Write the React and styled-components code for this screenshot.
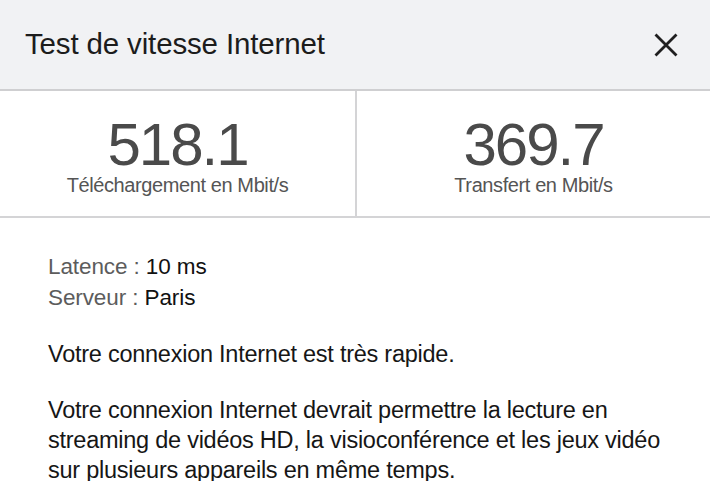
import React from "react";
import styled, { createGlobalStyle } from "styled-components";

const GlobalStyle = createGlobalStyle`
  html, body {
    margin: 0;
    padding: 0;
    background: #ffffff;
    font-family: "Liberation Sans", Arial, sans-serif;
    overflow: hidden;
  }
`;

const Page = styled.div`
  width: 710px;
  height: 481px;
  background: #ffffff;
  overflow: hidden;
`;

const Header = styled.div`
  height: 91px;
  background: #f1f2f4;
  border-bottom: 2px solid #cfcfd1;
  display: flex;
  align-items: center;
  justify-content: space-between;
  padding: 0 32px 0 25px;
  box-sizing: border-box;
`;

const Title = styled.h1`
  margin: 0 0 2px;
  font-size: 29.5px;
  font-weight: 400;
  color: #1c1c1c;
  letter-spacing: -0.15px;
`;

const CloseButton = styled.button`
  border: none;
  background: transparent;
  padding: 0;
  width: 24px;
  height: 24px;
  display: flex;
  align-items: center;
  justify-content: center;
  cursor: pointer;
`;

const Stats = styled.div`
  display: grid;
  grid-template-columns: 355px 1fr;
  height: 127px;
  border-bottom: 2px solid #d4d4d6;
  box-sizing: border-box;
`;

const Stat = styled.div`
  display: flex;
  flex-direction: column;
  align-items: center;
  justify-content: center;
  padding-top: 6px;
  border-left: ${(p) => (p.divided ? "2px solid #d4d4d6" : "none")};
`;

const Value = styled.div`
  font-size: 60px;
  line-height: 56px;
  color: #4a4a4a;
  letter-spacing: -2px;
`;

const Unit = styled.div`
  font-size: 20px;
  line-height: 24px;
  color: #555555;
  letter-spacing: -0.4px;
`;

const Body = styled.div`
  padding: 33px 44px 0 48px;
`;

const InfoLine = styled.div`
  font-size: 22.5px;
  line-height: 31px;
  color: #111111;
  letter-spacing: -0.1px;
`;

const InfoLabel = styled.span`
  color: #5c5c5c;
`;

const Paragraph = styled.p`
  margin: ${(p) => (p.first ? "26px 0 0" : "26px 0 0")};
  font-size: 23.5px;
  line-height: 30px;
  color: #161616;
  letter-spacing: -0.25px;
`;

const CloseIcon = () => (
  <svg width="24" height="24" viewBox="0 0 24 24">
    <path
      d="M1.5 1.5 L22.5 22.5 M22.5 1.5 L1.5 22.5"
      stroke="#1f1f1f"
      strokeWidth="2.8"
      fill="none"
    />
  </svg>
);

const App = () => {
  return (
    <Page>
      <GlobalStyle />
      <Header>
        <Title>Test de vitesse Internet</Title>
        <CloseButton aria-label="Fermer">
          <CloseIcon />
        </CloseButton>
      </Header>
      <Stats>
        <Stat>
          <Value>518.1</Value>
          <Unit>Téléchargement en Mbit/s</Unit>
        </Stat>
        <Stat divided>
          <Value>369.7</Value>
          <Unit>Transfert en Mbit/s</Unit>
        </Stat>
      </Stats>
      <Body>
        <InfoLine>
          <InfoLabel>Latence : </InfoLabel>10 ms
        </InfoLine>
        <InfoLine>
          <InfoLabel>Serveur : </InfoLabel>Paris
        </InfoLine>
        <Paragraph first>Votre connexion Internet est très rapide.</Paragraph>
        <Paragraph>
          Votre connexion Internet devrait permettre la lecture en streaming de
          vidéos HD, la visioconférence et les jeux vidéo sur plusieurs
          appareils en même temps.
        </Paragraph>
      </Body>
    </Page>
  );
};

export default App;
